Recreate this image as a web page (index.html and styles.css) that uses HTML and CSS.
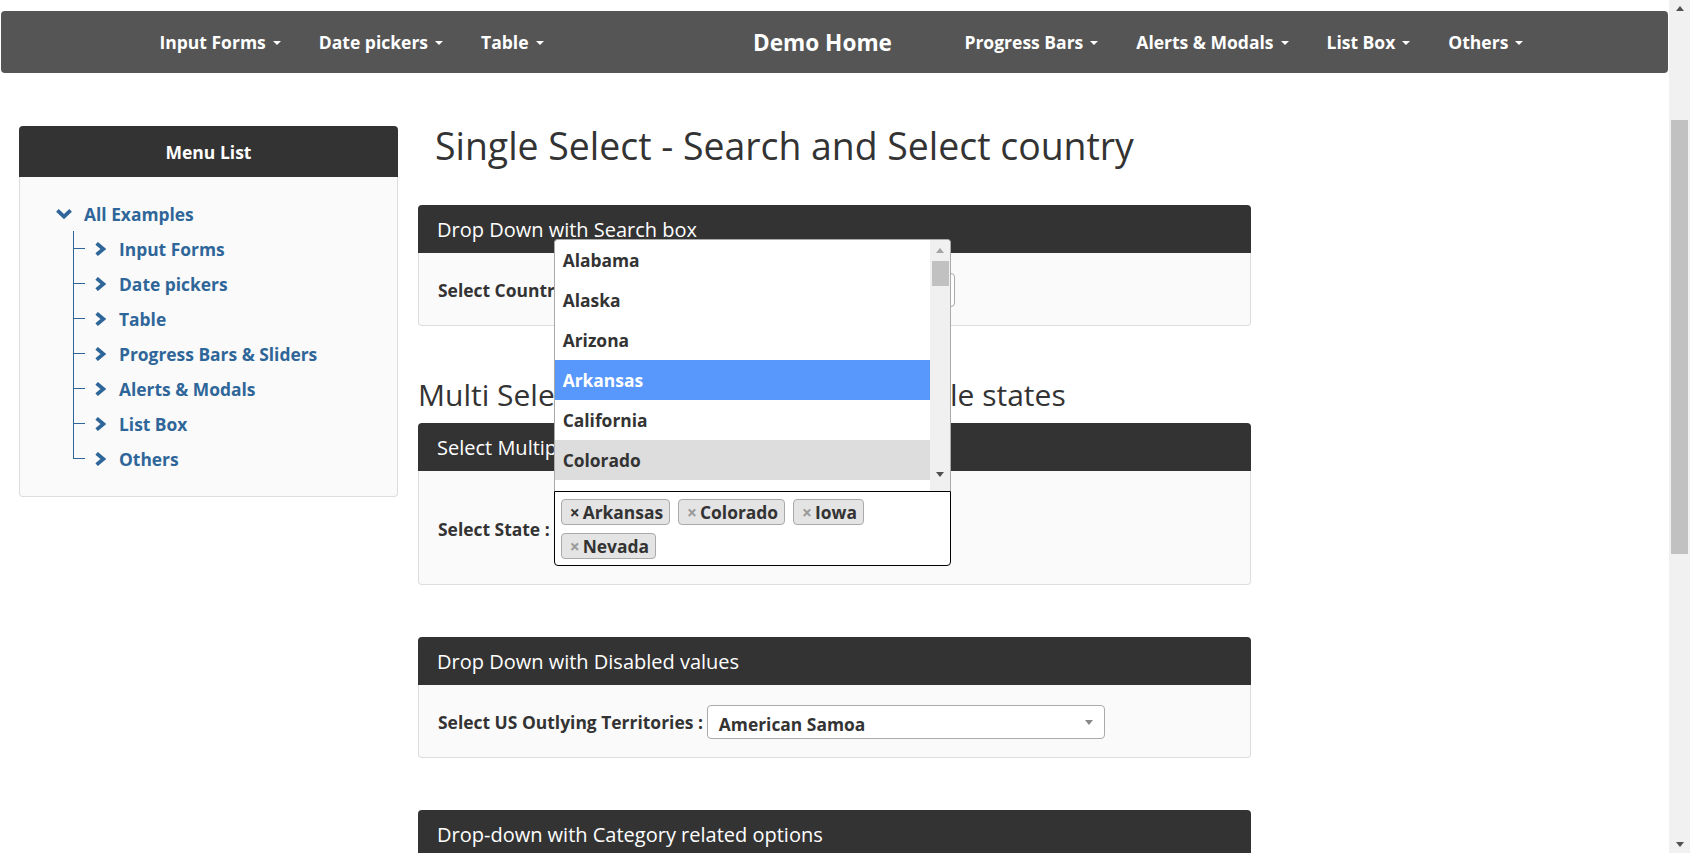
FILE: index.html
```html
<!DOCTYPE html>
<html lang="en">
<head>
<meta charset="utf-8">
<title>Single Select - Search and Select country</title>
<link rel="stylesheet" href="styles.css">
</head>
<body>
<div class="viewport">
  <div class="page">
    <nav class="navbar">
      <ul class="nav nav-left">
        <li><a>Input Forms<span class="caret"></span></a></li>
        <li><a>Date pickers<span class="caret"></span></a></li>
        <li><a>Table<span class="caret"></span></a></li>
      </ul>
      <a class="brand">Demo Home</a>
      <ul class="nav nav-right">
        <li><a>Progress Bars<span class="caret"></span></a></li>
        <li><a>Alerts &amp; Modals<span class="caret"></span></a></li>
        <li><a>List Box<span class="caret"></span></a></li>
        <li><a>Others<span class="caret"></span></a></li>
      </ul>
    </nav>

    <div class="layout">
      <aside class="sidebar">
        <div class="side-head">Menu List</div>
        <div class="side-body">
          <div class="tree-root">
            <svg class="chev-down" viewBox="0 0 16 10" width="16" height="10"><polyline points="1.4,1.4 8,7.6 14.6,1.4" /></svg>
            <a>All Examples</a>
          </div>
          <ul class="tree">
            <li><span class="branch"><i class="b-top"></i><i class="b-bot"></i></span><svg class="chev-right" viewBox="0 0 11 14" width="11" height="14"><polyline points="1.6,1.4 8.4,7 1.6,12.6" /></svg><a>Input Forms</a></li>
            <li><span class="branch"><i class="b-top"></i><i class="b-bot"></i></span><svg class="chev-right" viewBox="0 0 11 14" width="11" height="14"><polyline points="1.6,1.4 8.4,7 1.6,12.6" /></svg><a>Date pickers</a></li>
            <li><span class="branch"><i class="b-top"></i><i class="b-bot"></i></span><svg class="chev-right" viewBox="0 0 11 14" width="11" height="14"><polyline points="1.6,1.4 8.4,7 1.6,12.6" /></svg><a>Table</a></li>
            <li><span class="branch"><i class="b-top"></i><i class="b-bot"></i></span><svg class="chev-right" viewBox="0 0 11 14" width="11" height="14"><polyline points="1.6,1.4 8.4,7 1.6,12.6" /></svg><a>Progress Bars &amp; Sliders</a></li>
            <li><span class="branch"><i class="b-top"></i><i class="b-bot"></i></span><svg class="chev-right" viewBox="0 0 11 14" width="11" height="14"><polyline points="1.6,1.4 8.4,7 1.6,12.6" /></svg><a>Alerts &amp; Modals</a></li>
            <li><span class="branch"><i class="b-top"></i><i class="b-bot"></i></span><svg class="chev-right" viewBox="0 0 11 14" width="11" height="14"><polyline points="1.6,1.4 8.4,7 1.6,12.6" /></svg><a>List Box</a></li>
            <li class="last"><span class="branch"><i class="b-top"></i><i class="b-bot"></i></span><svg class="chev-right" viewBox="0 0 11 14" width="11" height="14"><polyline points="1.6,1.4 8.4,7 1.6,12.6" /></svg><a>Others</a></li>
          </ul>
        </div>
      </aside>

      <main class="content">
        <h1 class="title">Single Select - Search and Select country</h1>

        <section class="panel">
          <div class="panel-head">Drop Down with Search box</div>
          <div class="panel-body">
            <label class="field-label">Select Country :</label>
            <div class="select select-country"><span class="sel-arrow"></span></div>
          </div>
        </section>

        <h2 class="subtitle">Multi Select - Search and Select multiple states</h2>

        <section class="panel">
          <div class="panel-head">Select Multiple Values</div>
          <div class="panel-body">
            <label class="field-label">Select State :</label>
            <div class="multi">
              <div class="dropdown">
                <ul class="options">
                  <li class="opt">Alabama</li>
                  <li class="opt">Alaska</li>
                  <li class="opt">Arizona</li>
                  <li class="opt highlighted">Arkansas</li>
                  <li class="opt">California</li>
                  <li class="opt selected">Colorado</li>
                  <li class="opt">Connecticut</li>
                </ul>
                <div class="dd-scroll">
                  <span class="dd-btn"><i class="tri-up light"></i></span>
                  <span class="dd-thumb"></span>
                  <span class="dd-space"></span>
                  <span class="dd-btn dd-btn-bottom"><i class="tri-down"></i></span>
                </div>
              </div>
              <ul class="tags">
                <li class="tag"><span class="tag-x hover">×</span>Arkansas</li>
                <li class="tag"><span class="tag-x">×</span>Colorado</li>
                <li class="tag"><span class="tag-x">×</span>Iowa</li>
                <li class="tag"><span class="tag-x">×</span>Nevada</li>
              </ul>
            </div>
          </div>
        </section>

        <section class="panel">
          <div class="panel-head">Drop Down with Disabled values</div>
          <div class="panel-body">
            <label class="field-label">Select US Outlying Territories :</label>
            <div class="select select-territory"><span class="sel-text">American Samoa</span><span class="sel-arrow"></span></div>
          </div>
        </section>

        <section class="panel">
          <div class="panel-head">Drop-down with Category related options</div>
          <div class="panel-body">
            <label class="field-label">Select Category :</label>
          </div>
        </section>
      </main>
    </div>
  </div>

  <div class="scrollbar">
    <span class="sb-btn"><i class="tri-up"></i></span>
    <span class="sb-track"><span class="sb-thumb"></span></span>
    <span class="sb-btn"><i class="tri-down"></i></span>
  </div>
</div>
</body>
</html>
```

FILE: styles.css
```css
* { box-sizing: border-box; }

html, body {
  margin: 0;
  padding: 0;
  height: 100%;
  overflow: hidden;
}

body {
  font-family: "Open Sans", "Liberation Sans", sans-serif;
  color: #333;
  background: #fff;
  font-size: 17.4px;
}

ul { list-style: none; margin: 0; padding: 0; }
a { text-decoration: none; }

.viewport {
  display: flex;
  height: 853px;
}

.page {
  flex: 1;
  min-width: 0;
  overflow: hidden;
}

/* ---------- navbar ---------- */
.navbar {
  margin: 11px 1px 0 1px;
  height: 62px;
  background: #555;
  border-radius: 4px;
  display: flex;
  align-items: center;
  color: #fff;
}

.nav { display: flex; align-items: center; }

.nav-left {
  width: 752px;
  padding-left: 139.5px;
}

.nav li a {
  display: flex;
  align-items: center;
  padding: 0 19px;
  color: #fff;
  font-weight: 700;
  font-size: 17.5px;
}

.caret {
  width: 0;
  height: 0;
  margin-left: 7px;
  margin-top: 2px;
  border-top: 4.5px solid #fff;
  border-left: 4.5px solid transparent;
  border-right: 4.5px solid transparent;
}

.brand {
  color: #fff;
  font-weight: 700;
  font-size: 22.6px;
}

.nav-right { margin-left: 53.5px; }

/* ---------- layout ---------- */
.layout {
  display: flex;
  align-items: flex-start;
  padding: 53px 0 0 19px;
}

/* ---------- sidebar ---------- */
.sidebar {
  width: 379px;
  flex: none;
}

.side-head {
  height: 51px;
  background: #333;
  color: #fff;
  font-weight: 700;
  font-size: 17.5px;
  display: flex;
  align-items: center;
  justify-content: center;
  border-radius: 4px 4px 0 0;
}

.side-body {
  background: #fafafa;
  border: 1px solid #ddd;
  border-top: none;
  border-radius: 0 0 4px 4px;
  padding: 19px 0 20px 0;
}

.side-body a {
  color: #2f6699;
  font-weight: 700;
  font-size: 17.4px;
}

.tree-root {
  display: flex;
  align-items: center;
  height: 35px;
  padding-left: 36px;
}

.chev-down {
  fill: none;
  stroke: #2f6699;
  stroke-width: 3.8;
  margin-right: 12px;
}

.tree {
  margin-left: 53px;
}

.tree li {
  display: flex;
  align-items: center;
  height: 35px;
}

.branch {
  width: 12px;
  align-self: stretch;
  display: flex;
  flex-direction: column;
}

.branch i { flex: 1; border-left: 1px solid #2f6699; }
.branch .b-top { border-bottom: 1px solid #2f6699; }
.tree li.last .b-bot { border-left-color: transparent; }

.chev-right {
  fill: none;
  stroke: #2f6699;
  stroke-width: 3.8;
  margin: 0 13px 0 10px;
}

/* ---------- content ---------- */
.content {
  width: 833px;
  margin-left: 20px;
  flex: none;
}

.title {
  margin: 0 0 39px 0;
  padding-left: 17px;
  font-size: 37.4px;
  line-height: 40px;
  font-weight: 400;
  color: #333;
}

.subtitle {
  margin: 52px 0 11px 0;
  font-size: 30px;
  line-height: 34px;
  font-weight: 400;
  color: #333;
}

.panel + .panel { margin-top: 52px; }

.panel-head {
  height: 48px;
  background: #333;
  color: #fff;
  font-size: 20px;
  display: flex;
  align-items: center;
  padding: 0 19px;
  border-radius: 4px 4px 0 0;
}

.panel-body {
  background: #fafafa;
  border: 1px solid #ddd;
  border-top: none;
  border-radius: 0 0 4px 4px;
  padding: 20px 19px 18px 19px;
  display: flex;
  align-items: center;
  gap: 4px;
}

.field-label {
  font-weight: 700;
  font-size: 17.45px;
  white-space: nowrap;
}

.select {
  height: 34px;
  background: #fff;
  border: 1px solid #aaa;
  border-radius: 4px;
  display: flex;
  align-items: center;
  padding: 0 11px;
}

.select-country { width: 377px; }
.select-territory { width: 398px; }

.sel-text {
  flex: 1;
  font-weight: 700;
  font-size: 17.4px;
  color: #333;
  padding-top: 3px;
}

.sel-arrow {
  margin-left: auto;
  width: 0;
  height: 0;
  border-top: 5px solid #888;
  border-left: 4px solid transparent;
  border-right: 4px solid transparent;
}

/* ---------- multi select ---------- */
.multi {
  position: relative;
  width: 397px;
}

.tags {
  background: #fff;
  border: 1px solid #000;
  border-radius: 0 0 4px 4px;
  min-height: 75px;
  padding: 7px 6px 6px 6px;
  display: flex;
  flex-wrap: wrap;
  align-content: flex-start;
  gap: 8px;
}

.tag {
  height: 26px;
  background: #e4e4e4;
  border: 1px solid #aaa;
  border-radius: 4px;
  padding: 0 6px 0 8px;
  display: flex;
  align-items: center;
  font-weight: 700;
  font-size: 17.4px;
  color: #333;
}

.tag-x {
  color: #999;
  font-weight: 700;
  margin-right: 3px;
}

.tag-x.hover { color: #333; }

.dropdown {
  position: absolute;
  left: 0;
  right: 0;
  bottom: 100%;
  height: 252px;
  background: #fff;
  border: 1px solid #aaa;
  border-bottom: none;
  border-radius: 4px 4px 0 0;
  display: flex;
  overflow: hidden;
  z-index: 5;
}

.options {
  flex: 1;
  overflow: hidden;
}

.opt {
  height: 40px;
  line-height: 40px;
  padding: 0 8px;
  font-weight: 700;
  font-size: 17.4px;
  color: #333;
}

.opt.highlighted { background: #5897fb; color: #fff; }
.opt.selected { background: #ddd; }

.dd-scroll {
  width: 20px;
  background: #f0f0f0;
  display: flex;
  flex-direction: column;
  align-items: stretch;
}

.dd-btn {
  height: 21px;
  display: flex;
  align-items: center;
  justify-content: center;
}

.dd-btn-bottom { height: 24px; align-items: flex-start; padding-top: 5px; }

.dd-thumb {
  height: 25px;
  margin: 0 1px 0 2px;
  background: #c1c1c1;
}

.dd-space { flex: 1; }

.tri-up {
  width: 0;
  height: 0;
  border-bottom: 5px solid #505050;
  border-left: 4.5px solid transparent;
  border-right: 4.5px solid transparent;
}

.tri-up.light { border-bottom-color: #a3a3a3; }

.tri-down {
  width: 0;
  height: 0;
  border-top: 5px solid #505050;
  border-left: 4.5px solid transparent;
  border-right: 4.5px solid transparent;
}

/* ---------- page scrollbar ---------- */
.scrollbar {
  width: 21px;
  flex: none;
  background: #f1f1f1;
  display: flex;
  flex-direction: column;
}

.sb-btn {
  height: 17px;
  display: flex;
  align-items: center;
  justify-content: center;
}

.sb-track {
  flex: 1;
  padding-top: 103px;
}

.sb-thumb {
  display: block;
  height: 434px;
  margin: 0 2px;
  background: #c1c1c1;
}
```
